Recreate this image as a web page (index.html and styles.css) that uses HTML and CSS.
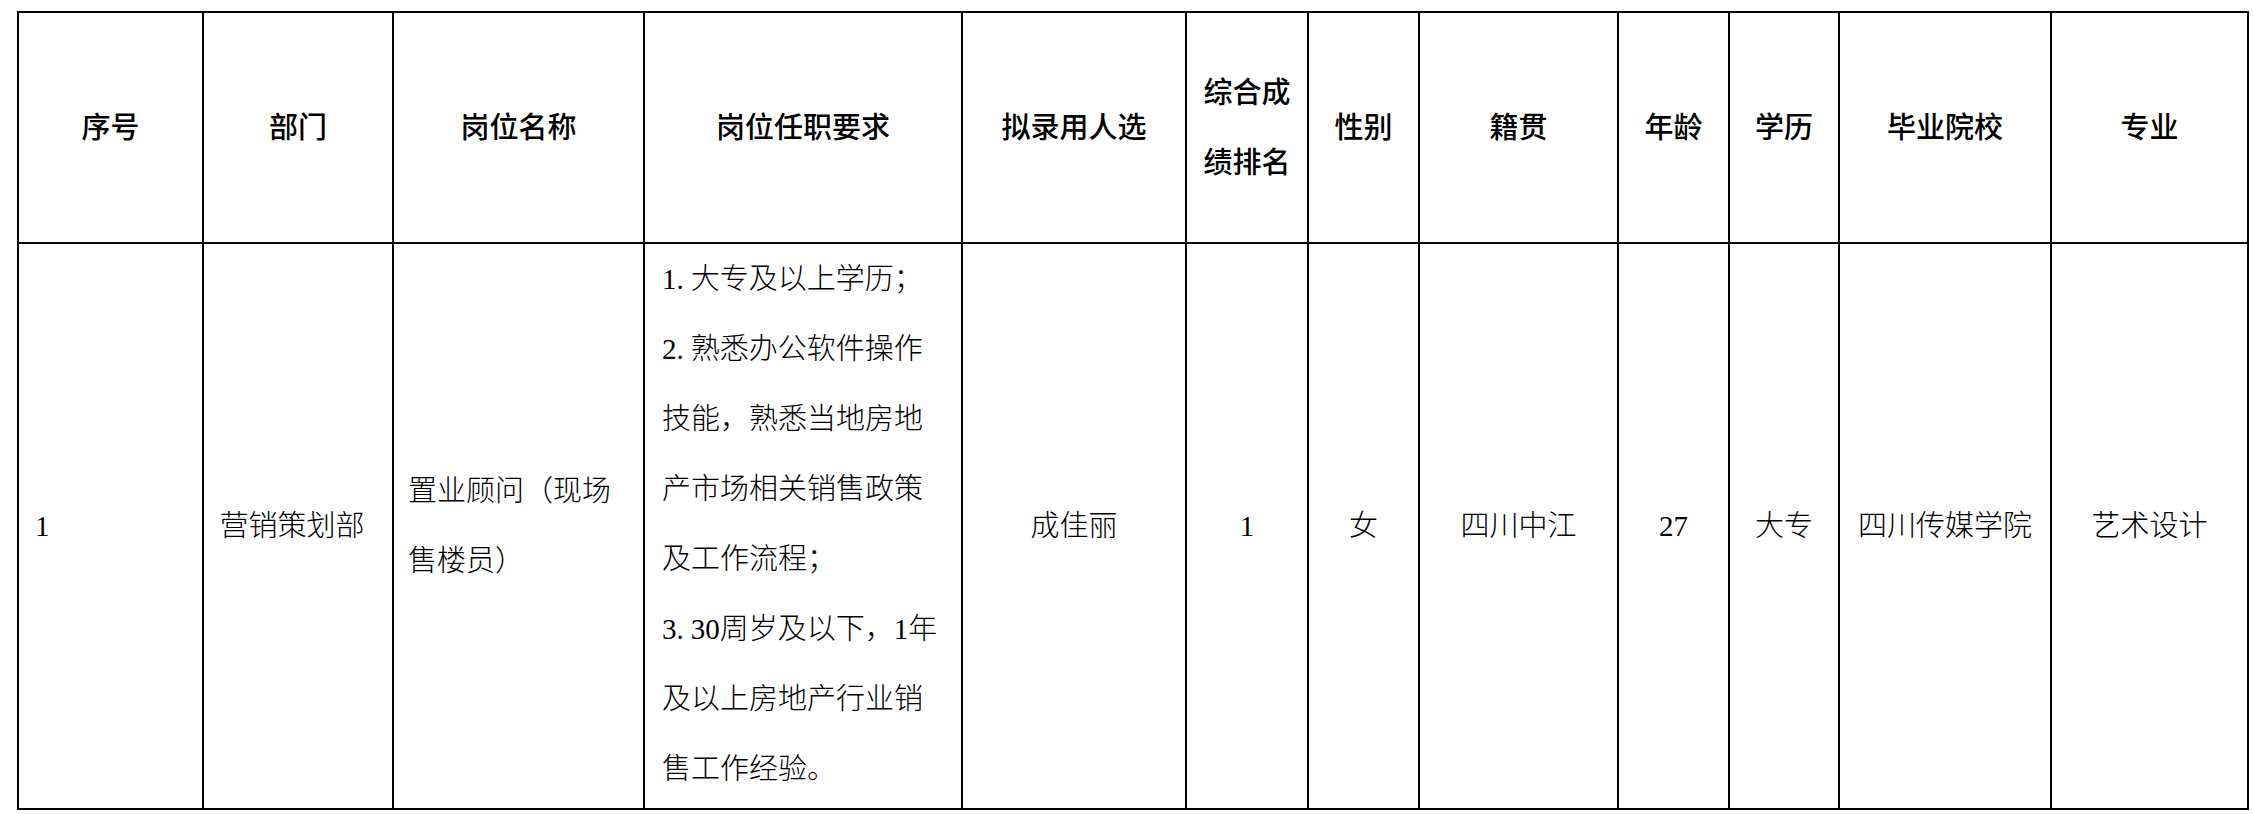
FILE: index.html
```html
<!DOCTYPE html>
<html lang="zh-CN">
<head>
<meta charset="utf-8">
<title>拟录用人员公示</title>
<link rel="stylesheet" href="styles.css">
</head>
<body>
<table class="roster">
  <colgroup>
    <col class="c-no">
    <col class="c-dept">
    <col class="c-post">
    <col class="c-req">
    <col class="c-name">
    <col class="c-rank">
    <col class="c-sex">
    <col class="c-origin">
    <col class="c-age">
    <col class="c-edu">
    <col class="c-school">
    <col class="c-major">
  </colgroup>
  <thead>
    <tr class="head-row">
      <th>序号</th>
      <th>部门</th>
      <th>岗位名称</th>
      <th>岗位任职要求</th>
      <th>拟录用人选</th>
      <th class="two-line">综合成<br>绩排名</th>
      <th>性别</th>
      <th>籍贯</th>
      <th>年龄</th>
      <th>学历</th>
      <th>毕业院校</th>
      <th>专业</th>
    </tr>
  </thead>
  <tbody>
    <tr class="body-row">
      <td class="left">1</td>
      <td class="dept">营销策划部</td>
      <td class="left lines">置业顾问（现场<br>售楼员）</td>
      <td class="left lines req"><span class="idx">1.</span>大专及以上学历；<br><span class="idx">2.</span>熟悉办公软件操作<br>技能，熟悉当地房地<br>产市场相关销售政策<br>及工作流程；<br><span class="idx">3.</span>30周岁及以下，1年<br>及以上房地产行业销<br>售工作经验。</td>
      <td>成佳丽</td>
      <td>1</td>
      <td>女</td>
      <td>四川中江</td>
      <td>27</td>
      <td>大专</td>
      <td>四川传媒学院</td>
      <td>艺术设计</td>
    </tr>
  </tbody>
</table>
</body>
</html>
```

FILE: styles.css
```css
html, body {
  margin: 0;
  padding: 0;
  background: #ffffff;
}

.roster {
  margin: 11px 0 0 17px;
  width: 2232px;
  table-layout: fixed;
  border-collapse: separate;
  border-spacing: 0;
  border-left: 2px solid #000;
  border-top: 2px solid #000;
  font-family: "Liberation Serif", "Noto Sans CJK SC", serif;
  font-size: 29px;
  color: #000;
}

.c-no { width: 185px; }
.c-dept { width: 190px; }
.c-post { width: 251px; }
.c-req { width: 318px; }
.c-name { width: 224px; }
.c-rank { width: 122px; }
.c-sex { width: 111px; }
.c-origin { width: 199px; }
.c-age { width: 111px; }
.c-edu { width: 110px; }
.c-school { width: 212px; }
.c-major { width: 197px; }

.roster th,
.roster td {
  box-sizing: border-box;
  border-right: 2px solid #000;
  border-bottom: 2px solid #000;
  padding: 0 16px;
  text-align: center;
  vertical-align: middle;
  line-height: 70px;
  white-space: nowrap;
  overflow: visible;
}

.roster th {
  font-weight: 500;
  padding: 0 4px;
}

.head-row {
  height: 231px;
}

.body-row {
  height: 566px;
}

.roster td {
  font-weight: 300;
}

.roster td.left {
  text-align: left;
}

.roster td.dept {
  padding: 0 22px 0 10px;
}

.roster td.lines {
  padding-left: 14px;
}

.roster td.req {
  vertical-align: top;
  padding-left: 17px;
  padding-top: 0;
}

.idx {
  padding-right: 7px;
}
```
